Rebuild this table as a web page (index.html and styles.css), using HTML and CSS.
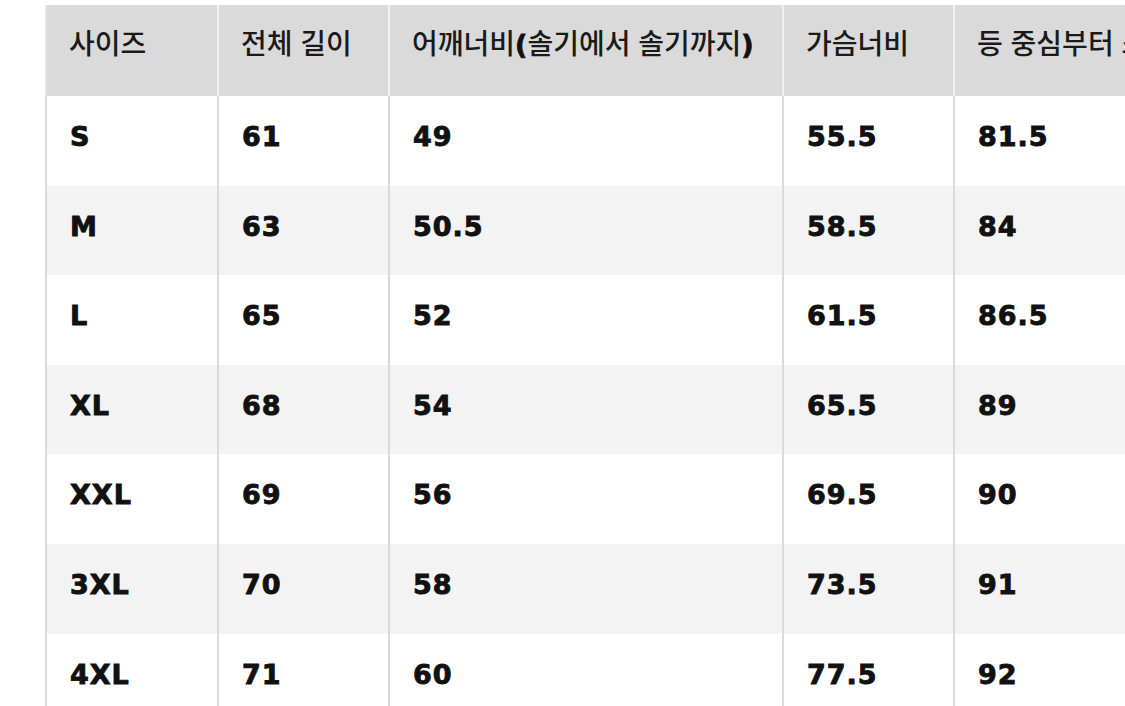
FILE: index.html
```html
<!DOCTYPE html>
<html lang="ko">
<head>
<meta charset="utf-8">
<title>사이즈 표</title>
<link rel="stylesheet" href="styles.css">
</head>
<body>
<div class="wrap">
<table class="size-table">
  <colgroup>
    <col class="c1"><col class="c2"><col class="c3"><col class="c4"><col class="c5">
  </colgroup>
  <thead>
    <tr>
      <th>사이즈</th>
      <th>전체 길이</th>
      <th>어깨너비<span class="paren">(</span>솔기에서 솔기까지<span class="paren">)</span></th>
      <th>가슴너비</th>
      <th>등 중심부터 소매길이</th>
    </tr>
  </thead>
  <tbody>
    <tr><td>S</td><td>61</td><td>49</td><td>55.5</td><td>81.5</td></tr>
    <tr class="alt"><td>M</td><td>63</td><td>50.5</td><td>58.5</td><td>84</td></tr>
    <tr><td>L</td><td>65</td><td>52</td><td>61.5</td><td>86.5</td></tr>
    <tr class="alt"><td>XL</td><td>68</td><td>54</td><td>65.5</td><td>89</td></tr>
    <tr><td>XXL</td><td>69</td><td>56</td><td>69.5</td><td>90</td></tr>
    <tr class="alt"><td>3XL</td><td>70</td><td>58</td><td>73.5</td><td>91</td></tr>
    <tr><td>4XL</td><td>71</td><td>60</td><td>77.5</td><td>92</td></tr>
  </tbody>
</table>
</div>
</body>
</html>
```

FILE: styles.css
```css
html, body {
  margin: 0;
  padding: 0;
  background: #ffffff;
  overflow: hidden;
}

.wrap {
  padding: 5px 0 0 45px;
  width: 1500px;
}

.size-table {
  border-collapse: collapse;
  table-layout: fixed;
  width: 1330px;
}

.c1 { width: 172px; }
.c2 { width: 171px; }
.c3 { width: 394px; }
.c4 { width: 171px; }
.c5 { width: 422px; }

.size-table th {
  background: #dadada;
  border-left: 2px solid #f0f0f0;
  height: 91px;
  box-sizing: border-box;
  padding: 21px 0 0 22px;
  vertical-align: top;
  text-align: left;
  white-space: nowrap;
  font-family: "Noto Sans CJK KR", "Noto Sans", sans-serif;
  font-weight: 500;
  font-size: 28px;
  line-height: 1.2;
  color: #1a1a1a;
}

.size-table th:first-child {
  border-left-color: #e4e4e4;
}

.paren {
  font-family: "DejaVu Sans", sans-serif;
  font-weight: 700;
  font-size: 27px;
  color: #111;
  -webkit-text-stroke: 0.8px #111;
}

.size-table td {
  border-left: 2px solid #dadada;
  height: 89.6px;
  box-sizing: border-box;
  padding: 25px 0 0 23px;
  vertical-align: top;
  text-align: left;
  white-space: nowrap;
  font-family: "DejaVu Sans", sans-serif;
  font-weight: 700;
  font-size: 27px;
  letter-spacing: 1px;
  line-height: 1.2;
  color: #111111;
  -webkit-text-stroke: 0.9px #111111;
}

.size-table tr.alt td {
  background: #f3f3f3;
}
```
